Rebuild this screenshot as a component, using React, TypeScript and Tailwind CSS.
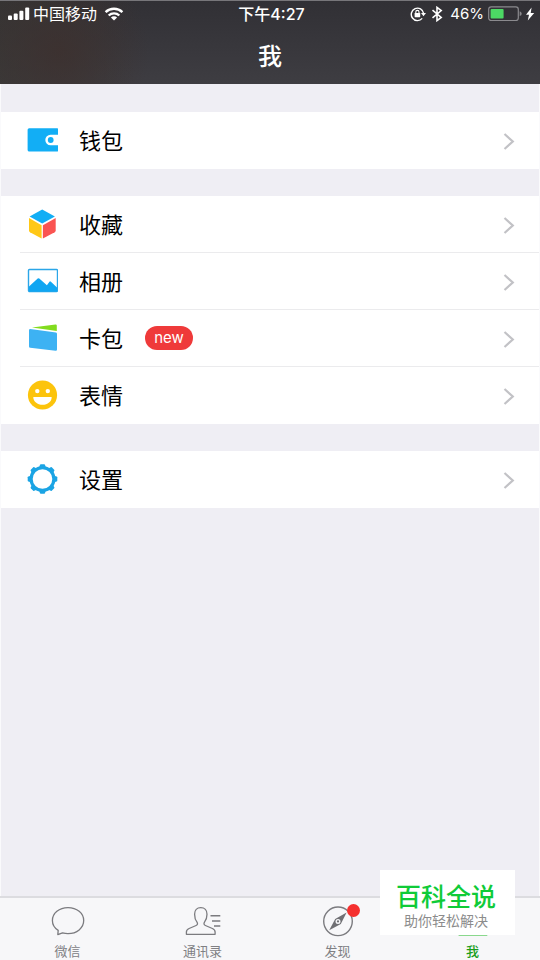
import type { ReactNode } from "react";

function WalletIcon() {
  return (
    <svg viewBox="0 0 32 32" className="h-8 w-8" aria-hidden="true">
      <path
        fill="#12aef5"
        d="M3.200 4.200H31a1.300 1.300 0 0 1 1.300 1.300V10.800H24.500a5 5 0 0 0 0 10.400H32.300V26.200a1.300 1.300 0 0 1-1.300 1.300H3.200A1.600 1.600 0 0 1 1.600 26V5.800a1.600 1.600 0 0 1 1.600-1.600z"
      />
      <circle cx="24.700" cy="16" r="2.900" fill="#12aef5" />
    </svg>
  );
}

function CubeIcon() {
  return (
    <svg viewBox="0 0 32 32" className="h-8 w-8" aria-hidden="true">
      <path fill="#12aef5" d="M16.200 1.400 28.900 8.400 16.200 15.600 3.600 8.400z" />
      <path fill="#ffc817" d="M3 10l12.600 7.200v13.300L4 24.200a2 2 0 0 1-1-1.700z" />
      <path fill="#fa5452" d="M29.700 10 16.900 17.200v13.300l11.800-6.300a2 2 0 0 0 1-1.700z" />
    </svg>
  );
}

function AlbumIcon() {
  return (
    <svg viewBox="0 0 32 32" className="h-8 w-8" aria-hidden="true">
      <rect x="2.500" y="4.500" width="29" height="22" rx="1" fill="none" stroke="#2ba6e8" strokeWidth="1.400" />
      <path
        fill="#10a6f2"
        d="M3 21.500 11.700 13.600a1.200 1.200 0 0 1 1.600 0l7.600 6.600 2.400-3.300a1 1 0 0 1 1.600-.1L31 22.500V26.500H3z"
      />
    </svg>
  );
}

function CardsIcon() {
  return (
    <svg viewBox="0 0 32 32" className="h-8 w-8" aria-hidden="true">
      <path fill="#82dc1e" d="M6 5.400 29.500 2.400a1.200 1.200 0 0 1 1.300 1.200V9z" />
      <path
        fill="#3db2f3"
        d="M4.200 7 30 10.600a1.300 1.300 0 0 1 1 1.200V27.500a1.300 1.300 0 0 1-1.500 1.300L4.200 25.700A1.400 1.400 0 0 1 3 24.400V8.200A1.200 1.200 0 0 1 4.200 7z"
      />
    </svg>
  );
}

function SmileyIcon() {
  return (
    <svg viewBox="0 0 32 32" className="h-8 w-8" aria-hidden="true">
      <circle cx="16.500" cy="16" r="14.600" fill="#fcc40c" />
      <circle cx="11.300" cy="12.100" r="2.200" fill="#fff" />
      <circle cx="21.800" cy="12.100" r="2.200" fill="#fff" />
      <path fill="#fff" d="M7.300 18h18.400c0 4.600-4 7.800-9.200 7.800S7.300 22.600 7.300 18z" />
    </svg>
  );
}

function GearIcon() {
  const teeth = [0, 45, 90, 135, 180, 225, 270, 315];
  return (
    <svg viewBox="0 0 32 32" className="h-8 w-8" aria-hidden="true">
      <circle cx="16.500" cy="16" r="11.400" fill="none" stroke="#1ba4e4" strokeWidth="3.200" />
      {teeth.map((angle) => (
        <path
          key={angle}
          d="M13.300 4.500 13.900 1.900Q14.100 1.200 14.800 1.200H18.200Q18.900 1.200 19.100 1.900L19.700 4.500z"
          fill="#1ba4e4"
          transform={`rotate(${angle} 16.5 16)`}
        />
      ))}
    </svg>
  );
}

function Chevron() {
  return (
    <svg viewBox="0 0 12 18" className="h-[18px] w-3" fill="none" stroke="#c2c2c6" strokeWidth="2.200" aria-hidden="true">
      <path d="M1.500 2 9.800 9.500l-8.300 7.500" />
    </svg>
  );
}

function SignalIcon() {
  return (
    <svg viewBox="0 0 22 14" className="h-[14px] w-[22px]" fill="#fff" aria-hidden="true">
      <rect x="0" y="8.500" width="4" height="4.500" rx="1" />
      <rect x="5.700" y="6.500" width="4" height="6.500" rx="1" />
      <rect x="11.400" y="3.800" width="4" height="9.200" rx="1" />
      <rect x="17.200" y="0.500" width="4" height="12.500" rx="1" />
    </svg>
  );
}

function WifiIcon() {
  return (
    <svg viewBox="0 0 20 14" className="h-[14px] w-5" fill="none" stroke="#fff" strokeWidth="2.400" aria-hidden="true">
      <path d="M1.600 5.200a12 12 0 0 1 16.800 0" />
      <path d="M4.700 8.500a7.600 7.600 0 0 1 10.600 0" />
      <path d="M10 13.500 6.900 10.600a4.400 4.400 0 0 1 6.200 0z" fill="#fff" stroke="none" />
    </svg>
  );
}

function RotationLockIcon() {
  return (
    <svg viewBox="0 0 16 16" className="h-4 w-4" fill="none" stroke="#fff" strokeWidth="1.400" aria-hidden="true">
      <path d="M12.200 12.400A6.200 6.200 0 1 1 13.600 7.400" />
      <path d="M11 7h5l-2.500 3.300z" fill="#fff" stroke="none" />
      <rect x="4.600" y="7" width="5.600" height="4.200" rx=".6" fill="#fff" stroke="none" />
      <path d="M5.800 7.200V6a1.600 1.600 0 0 1 3.200 0v1.200" strokeWidth="1.100" />
    </svg>
  );
}

function BluetoothIcon() {
  return (
    <svg viewBox="0 0 12 16" className="h-4 w-3" fill="none" stroke="#fff" strokeWidth="1.600" aria-hidden="true">
      <path d="M1.500 4.200 10.200 11.400 6 14.600V1.400l4.200 3.200L1.500 11.800" />
    </svg>
  );
}

function BatteryIcon() {
  return (
    <svg viewBox="0 0 34 16" className="h-4 w-[34px]" aria-hidden="true">
      <rect x=".7" y=".9" width="29.600" height="13.600" rx="2.500" fill="none" stroke="#8b8a8e" strokeWidth="1.200" />
      <rect x="2.600" y="2.900" width="13" height="9.600" rx="1" fill="#4cd964" />
      <path d="M31.700 5.300q2 .6 2 2.400t-2 2.400z" fill="#8b8a8e" />
    </svg>
  );
}

function BoltIcon() {
  return (
    <svg viewBox="0 0 10 14" className="h-[14px] w-[10px]" fill="#fff" aria-hidden="true">
      <path d="M6.600.5 1 7.800h3L2.800 13.500 9.200 5.900H5.700z" />
    </svg>
  );
}

function ChatIcon() {
  return (
    <svg viewBox="0 0 36 32" className="h-8 w-9" fill="none" stroke="#7b7b7f" strokeWidth="1.300" strokeLinejoin="round" aria-hidden="true">
      <path d="M18 2.600c8.800 0 15.700 5.500 15.700 13S26.800 28.600 18 28.600c-2 0-3.800-.3-5.500-.8L7.800 29.600l.4-4.200C4.500 23.200 2.400 19.700 2.400 15.600 2.400 8.100 9.200 2.600 18 2.600z" />
    </svg>
  );
}

function ContactsIcon() {
  return (
    <svg viewBox="0 0 36 32" className="h-8 w-9" fill="none" stroke="#7b7b7f" strokeWidth="1.300" strokeLinejoin="round" aria-hidden="true">
      <path d="M15.800 2.600c3.800 0 6.200 2.800 6.200 6.600 0 3.200-.9 6-2.500 8-.9 1.300-.6 2.700.9 3.300l7 3c1.900.8 2.700 2 2.700 3.600v2.200H1.400v-2.200c0-1.600.8-2.800 2.700-3.600l7-3c1.500-.6 1.800-2 .9-3.300-1.600-2-2.400-4.800-2.400-8 0-3.800 2.400-6.600 6.200-6.600z" />
      <path d="M25.500 10.800h9.800M27 15.900h8.300M29 21h6.300" strokeWidth="1.500" />
    </svg>
  );
}

function CompassIcon() {
  return (
    <svg viewBox="0 0 36 32" className="h-8 w-9" aria-hidden="true">
      <circle cx="18" cy="16.300" r="14.300" fill="none" stroke="#7b7b7f" strokeWidth="1.400" />
      <path
        fill="#707074"
        fillRule="evenodd"
        d="M26.600 7.500 20.800 19 9.200 25.300 15.200 14zM18 13.900a2.500 2.500 0 1 0 0 5 2.500 2.500 0 0 0 0-5z"
      />
      <circle cx="18" cy="16.400" r="1.100" fill="#707074" />
    </svg>
  );
}

function MeIcon() {
  return (
    <svg viewBox="0 0 36 32" className="h-8 w-9" fill="#1fb922" aria-hidden="true">
      <path d="M18 2.600c3.800 0 6.200 2.800 6.200 6.600 0 3.200-.9 6-2.500 8-.9 1.300-.6 2.700.9 3.300l7 3c1.900.8 2.700 2 2.700 3.600V30.600H3.600v-3.500c0-1.600.8-2.800 2.700-3.600l7-3c1.500-.6 1.800-2 .9-3.300-1.600-2-2.400-4.800-2.400-8 0-3.800 2.400-6.600 6.200-6.600z" />
    </svg>
  );
}

type Item = { label: string; icon: ReactNode; badge?: string };

const groups: Item[][] = [
  [{ label: "钱包", icon: <WalletIcon /> }],
  [
    { label: "收藏", icon: <CubeIcon /> },
    { label: "相册", icon: <AlbumIcon /> },
    { label: "卡包", icon: <CardsIcon />, badge: "new" },
    { label: "表情", icon: <SmileyIcon /> },
  ],
  [{ label: "设置", icon: <GearIcon /> }],
];

const tabs = [
  { label: "微信", icon: <ChatIcon /> },
  { label: "通讯录", icon: <ContactsIcon /> },
  { label: "发现", icon: <CompassIcon />, dot: true },
  { label: "我", icon: <MeIcon />, active: true },
];

function MenuRow({ item, last }: { item: Item; last: boolean }) {
  return (
    <li className="pl-[19px]">
      <button
        type="button"
        className={`flex h-[57px] w-full items-center border-b pr-6 pl-[6px] text-left ${
          last ? "border-transparent" : "border-[#ebebed]"
        }`}
      >
        {item.icon}
        <span className="ml-[21px] pt-px text-[22px] leading-8 text-black">{item.label}</span>
        {item.badge && (
          <span className="ml-[22px] flex h-6 w-12 items-center justify-center rounded-full bg-[#ef3a3a] pb-px text-[15px] leading-5 text-white">
            {item.badge}
          </span>
        )}
        <span className="ml-auto pt-px">
          <Chevron />
        </span>
      </button>
    </li>
  );
}

export default function App() {
  return (
    <div className="flex min-h-screen flex-col bg-[#efeef4] font-['Inter','Noto_Sans_CJK_SC',sans-serif]">
      <header className="h-[84px] border-t border-[#77767a] bg-[radial-gradient(ellipse_90px_90px_at_11%_60%,#3d302ecc,#3d302e00),linear-gradient(to_right,#38373399,#38373300_25%),linear-gradient(to_bottom,#313035,#3e3d42)] text-white">
        <div className="grid h-[26px] grid-cols-[1fr_auto_1fr] items-center pr-[5px] pl-2 text-base leading-6">
          <div className="flex items-center">
            <SignalIcon />
            <span className="ml-[3px]">中国移动</span>
            <span className="ml-[7px]">
              <WifiIcon />
            </span>
          </div>
          <span className="font-medium">下午4:27</span>
          <div className="flex items-center justify-end">
            <RotationLockIcon />
            <span className="ml-[5px]">
              <BluetoothIcon />
            </span>
            <span className="mr-1 ml-[7px] text-[15px]">46%</span>
            <BatteryIcon />
            <span className="ml-[3px]">
              <BoltIcon />
            </span>
          </div>
        </div>
        <h1 className="mt-[14px] text-center text-2xl leading-8 font-medium">我</h1>
      </header>

      <main className="flex flex-1 flex-col gap-[27px] border-x border-[#fafafc] pt-7">
        {groups.map((group) => (
          <ul key={group[0].label} className="bg-white">
            {group.map((item, index) => (
              <MenuRow key={item.label} item={item} last={index === group.length - 1} />
            ))}
          </ul>
        ))}
      </main>

      <div className="relative">
        <nav className="grid h-16 grid-cols-4 border-t-2 border-[#dcdce0] bg-[#f7f7f9]">
          {tabs.map((tab) => (
            <button key={tab.label} type="button" className="flex flex-col items-center pt-[7px]">
              <span className="relative">
                {tab.icon}
                {tab.dot && <span className="absolute -top-[1px] -right-1 h-[13px] w-[13px] rounded-full bg-[#f5302f]" />}
              </span>
              <span
                className={`mt-1 text-[13px] leading-5 ${tab.active ? "font-medium text-[#1a9e1c]" : "text-[#808084]"}`}
              >
                {tab.label}
              </span>
            </button>
          ))}
        </nav>
        <div className="absolute right-[25px] bottom-[25px] flex h-[65px] w-[135px] flex-col items-center bg-white pt-[11px] pr-[3px]">
          <span className="text-[25px] leading-8 font-medium text-[#0fcb38]">百科全说</span>
          <span className="text-sm leading-4 text-[#8c8c8c]">助你轻松解决</span>
        </div>
      </div>
    </div>
  );
}
